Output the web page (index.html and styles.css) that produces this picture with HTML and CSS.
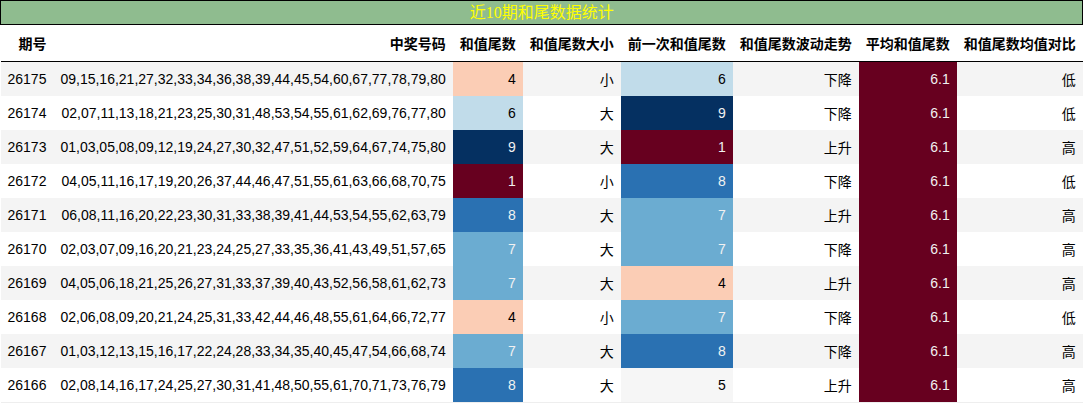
FILE: index.html
```html
<!DOCTYPE html>
<html lang="zh">
<head>
<meta charset="utf-8">
<title>近10期和尾数据统计</title>
<link rel="stylesheet" href="styles.css">
</head>
<body>
<table class="stats">
  <thead>
    <tr><th class="title" colspan="8">近10期和尾数据统计</th></tr>
    <tr class="head">
      <th>期号</th><th>中奖号码</th><th>和值尾数</th><th>和值尾数大小</th><th>前一次和值尾数</th><th>和值尾数波动走势</th><th>平均和值尾数</th><th>和值尾数均值对比</th>
    </tr>
  </thead>
  <tbody>
    <tr><td>26175</td><td>09,15,16,21,27,32,33,34,36,38,39,44,45,54,60,67,77,78,79,80</td><td class="c4">4</td><td>小</td><td class="c6">6</td><td>下降</td><td class="c1">6.1</td><td>低</td></tr>
    <tr><td>26174</td><td>02,07,11,13,18,21,23,25,30,31,48,53,54,55,61,62,69,76,77,80</td><td class="c6">6</td><td>大</td><td class="c9">9</td><td>下降</td><td class="c1">6.1</td><td>低</td></tr>
    <tr><td>26173</td><td>01,03,05,08,09,12,19,24,27,30,32,47,51,52,59,64,67,74,75,80</td><td class="c9">9</td><td>大</td><td class="c1">1</td><td>上升</td><td class="c1">6.1</td><td>高</td></tr>
    <tr><td>26172</td><td>04,05,11,16,17,19,20,26,37,44,46,47,51,55,61,63,66,68,70,75</td><td class="c1">1</td><td>小</td><td class="c8">8</td><td>下降</td><td class="c1">6.1</td><td>低</td></tr>
    <tr><td>26171</td><td>06,08,11,16,20,22,23,30,31,33,38,39,41,44,53,54,55,62,63,79</td><td class="c8">8</td><td>大</td><td class="c7">7</td><td>上升</td><td class="c1">6.1</td><td>高</td></tr>
    <tr><td>26170</td><td>02,03,07,09,16,20,21,23,24,25,27,33,35,36,41,43,49,51,57,65</td><td class="c7">7</td><td>大</td><td class="c7">7</td><td>下降</td><td class="c1">6.1</td><td>高</td></tr>
    <tr><td>26169</td><td>04,05,06,18,21,25,26,27,31,33,37,39,40,43,52,56,58,61,62,73</td><td class="c7">7</td><td>大</td><td class="c4">4</td><td>上升</td><td class="c1">6.1</td><td>高</td></tr>
    <tr><td>26168</td><td>02,06,08,09,20,21,24,25,31,33,42,44,46,48,55,61,64,66,72,77</td><td class="c4">4</td><td>小</td><td class="c7">7</td><td>下降</td><td class="c1">6.1</td><td>低</td></tr>
    <tr><td>26167</td><td>01,03,12,13,15,16,17,22,24,28,33,34,35,40,45,47,54,66,68,74</td><td class="c7">7</td><td>大</td><td class="c8">8</td><td>下降</td><td class="c1">6.1</td><td>高</td></tr>
    <tr><td>26166</td><td>02,08,14,16,17,24,25,27,30,31,41,48,50,55,61,70,71,73,76,79</td><td class="c8">8</td><td>大</td><td class="c5">5</td><td>上升</td><td class="c1">6.1</td><td>高</td></tr>
  </tbody>
</table>
</body>
</html>
```
FILE: styles.css
```css
html, body {
  margin: 0;
  padding: 0;
  background: #ffffff;
}

.stats {
  border-collapse: collapse;
  font-family: "Liberation Sans", "Noto Sans CJK SC", sans-serif;
  font-size: 14px;
  color: #000000;
}

.stats th,
.stats td {
  padding: 0 7px;
  text-align: right;
  white-space: nowrap;
}

.stats .title {
  height: 23px;
  padding: 0;
  border: 1px solid #000000;
  background: #8fbc8f;
  color: #ffff00;
  font-family: "Liberation Serif", "Noto Sans CJK SC", serif;
  font-size: 16px;
  font-weight: normal;
  text-align: center;
  line-height: 23px;
}

.stats .head th {
  height: 36px;
  font-weight: bold;
  border-bottom: 1px solid #000000;
}

.stats tbody td {
  height: 34px;
}

.stats tbody tr:nth-child(odd) {
  background: #f4f4f4;
}

.stats tbody tr:nth-child(even) {
  background: #ffffff;
}

.stats tbody tr:last-child td {
  border-bottom: 1px solid #eeeeee;
}

.stats td.c1 { background: #67001f; color: #f1f1f1; }
.stats td.c4 { background: #fbcdb5; color: #000000; }
.stats td.c5 { background: #f6f6f6; color: #000000; }
.stats td.c6 { background: #c1dcea; color: #000000; }
.stats td.c7 { background: #6bacd1; color: #f1f1f1; }
.stats td.c8 { background: #2a71b2; color: #f1f1f1; }
.stats td.c9 { background: #053061; color: #f1f1f1; }
```
